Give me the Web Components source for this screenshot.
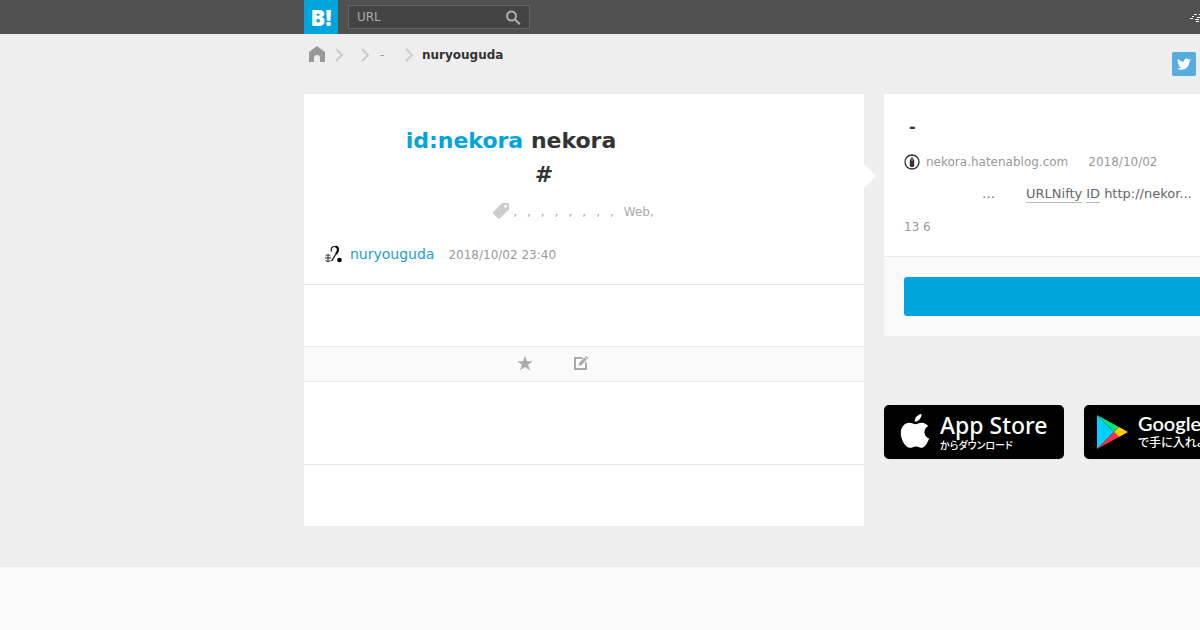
<!DOCTYPE html>
<html lang="ja">
<head>
<meta charset="utf-8">
<meta name="viewport" content="width=device-width, initial-scale=1">
<title>nuryouguda</title>
<style>
  body {
    --brand: #00a5de;
    --line: #e8e8e8;
    --muted: #999;
    --gutter: 304px;
    --wide: 380px;
    margin: 0;
    min-height: 100vh;
    overflow: hidden;
    background: #eee;
    color: #333;
    font: 12px/18px "DejaVu Sans", "Noto Sans CJK JP", sans-serif;
  }
</style>
</head>
<body>
<hb-page>
  <hb-header slot="header"></hb-header>
  <hb-breadcrumb slot="path">nuryouguda</hb-breadcrumb>
  <hb-share slot="share"></hb-share>
  <hb-comment>
    <hb-tags slot="tags"></hb-tags>
    <hb-user slot="user" name="nuryouguda">2018/10/02 23:40</hb-user>
  </hb-comment>
  <hb-entry slot="side" site="nekora.hatenablog.com" date="2018/10/02"></hb-entry>
  <hb-stores slot="side"></hb-stores>
</hb-page>

<script>
// Base class: clones the markup of the element into its shadow root
class HbElement extends HTMLElement {
  constructor() {
    super();
    const template = document.createElement('template');
    template.innerHTML = this.constructor.markup;
    this.attachShadow({ mode: 'open' });
    this.shadowRoot.appendChild(template.content.cloneNode(true));
  }
}

class HbPage extends HbElement {
  static markup = `
    <style>
      :host { display: flex; flex-direction: column; min-height: 100vh; }
      .grid {
        display: grid;
        grid-template-columns: minmax(560px, 3fr) minmax(var(--wide), 2fr);
        column-gap: 20px;
        margin-left: var(--gutter);
      }
      .top { height: 60px; align-items: start; }
      .footer { flex: 1; margin-top: 41px; background: #fafafa; }
    </style>
    <slot name="header"></slot>
    <div class="grid top">
      <slot name="path"></slot>
      <slot name="share"></slot>
    </div>
    <div class="grid">
      <main><slot></slot></main>
      <aside><slot name="side"></slot></aside>
    </div>
    <footer class="footer"></footer>
  `;
}
customElements.define('hb-page', HbPage);


class HbHeader extends HbElement {
  static markup = `
    <style>
      :host { display: block; background: #505050; }
      .bar {
        display: flex;
        align-items: center;
        gap: 10px;
        height: 34px;
        min-width: 960px;
        margin-left: var(--gutter);
      }
      .logo {
        width: 34px;
        background: var(--brand);
        color: #fff;
        font: 900 22px/34px "Noto Sans", "Open Sans", sans-serif;
        text-align: center;
        text-decoration: none;
      }
      form {
        display: flex;
        align-items: center;
        box-sizing: border-box;
        width: 182px;
        height: 24px;
        border: 1px solid #666;
        background: #444;
      }
      input {
        flex: 1;
        min-width: 0;
        padding: 0 8px;
        border: 0;
        background: none;
        color: #ddd;
        font: inherit;
      }
      input::placeholder { color: #aaa; opacity: 1; }
      button { padding: 0 8px; border: 0; background: none; line-height: 0; }
      .speed { margin-left: auto; margin-right: 55px; line-height: 0; }
    </style>
    <header class="bar">
      <a class="logo" href="#">B!</a>
      <form>
        <input type="search" placeholder="URL" aria-label="URL">
        <button type="button" aria-label="検索">
          <svg width="16" height="16" viewBox="0 0 16 16" fill="none" stroke="#b0b0b0" stroke-width="2">
            <circle cx="6.500" cy="7" r="4.500"/><path d="M9.800 10.300l5 5"/>
          </svg>
        </button>
      </form>
      <a class="speed" href="#" aria-label="お知らせ">
        <svg width="20" height="14" viewBox="0 0 20 14" stroke="#fff" stroke-width="1">
          <path d="M5 4.500h3M10 4.500h4M3 6.500h2M8 7.500h4M1 8.500h3M6 9.500h4M7 11.500h3"/>
        </svg>
      </a>
    </header>
  `;
}
customElements.define('hb-header', HbHeader);


class HbBreadcrumb extends HbElement {
  static markup = `
    <style>
      :host { display: block; font-weight: bold; }
      nav { display: flex; align-items: center; height: 41px; padding-left: 4px; }
      svg { display: block; flex: none; }
      a { color: var(--muted); font-weight: normal; text-decoration: none; }
      .home { margin-right: 8px; }
      .blank { width: 16px; }
      .title { width: 34px; padding-left: 10px; box-sizing: border-box; }
      .now { margin-left: 8px; }
    </style>
    <nav>
      <a class="home" href="#" aria-label="ホーム">
        <svg width="18" height="18" viewBox="0 0 18 18" fill="#999">
          <path d="M9 0L1 6v10h5v-4a3 3 0 0 1 6 0v4h5V6z"/>
        </svg>
      </a>
      <svg class="arrow" width="10" height="14" viewBox="0 0 10 14" fill="none" stroke="#ccc" stroke-width="2"><path d="M2 1l6 6-6 6"/></svg>
      <span class="blank"></span>
      <svg class="arrow" width="10" height="14" viewBox="0 0 10 14" fill="none" stroke="#ccc" stroke-width="2"><path d="M2 1l6 6-6 6"/></svg>
      <a class="title" href="#">-</a>
      <svg class="arrow" width="10" height="14" viewBox="0 0 10 14" fill="none" stroke="#ccc" stroke-width="2"><path d="M2 1l6 6-6 6"/></svg>
      <span class="now"><slot></slot></span>
    </nav>
  `;
}
customElements.define('hb-breadcrumb', HbBreadcrumb);


class HbShare extends HbElement {
  static markup = `
    <style>
      :host { display: flex; justify-content: flex-end; padding: 18px 68px 0 0; }
      button {
        display: grid;
        place-items: center;
        width: 24px;
        height: 24px;
        padding: 0;
        border: 0;
        border-radius: 2px;
        background: #55acde;
      }
    </style>
    <button type="button" aria-label="Twitter">
      <svg width="14" height="14" viewBox="0 0 24 24" fill="#fff">
        <path d="M23.6 4.9a9.700 9.700 0 0 1-2.700.75 4.800 4.800 0 0 0 2.100-2.650 9.700 9.700 0 0 1-3.100 1.200 4.850 4.850 0 0 0-8.250 4.400A13.700 13.700 0 0 1 1.700 3.600a4.850 4.850 0 0 0 1.500 6.450 4.800 4.800 0 0 1-2.200-.6v.06a4.850 4.850 0 0 0 3.900 4.750 4.850 4.850 0 0 1-2.200.08 4.850 4.850 0 0 0 4.500 3.360A9.700 9.700 0 0 1 0 19.700a13.700 13.700 0 0 0 7.450 2.180c8.900 0 13.800-7.400 13.800-13.800l-.02-.63a9.800 9.800 0 0 0 2.400-2.500z"/>
      </svg>
    </button>
  `;
}
customElements.define('hb-share', HbShare);


class HbComment extends HbElement {
  static markup = `
    <style>
      :host { display: block; background: #fff; }
      .head { position: relative; padding: 30px 20px 20px; }
      /* Pointer towards the entry card */
      .head::after {
        content: "";
        position: absolute;
        left: 100%;
        top: 70px;
        border: 12px solid transparent;
        border-left-color: #fff;
        border-right: 0;
      }
      h1 { margin: 0 0 11px; font-size: 22px; line-height: 34px; text-align: center; }
      h1 span { display: block; padding-right: 146px; }
      h1 .second { padding-right: 80px; }
      h1 a { color: var(--brand); text-decoration: none; }
      section { height: 61px; border-top: 1px solid var(--line); }
      .tall { height: 82px; }
      .actions {
        display: flex;
        justify-content: center;
        align-items: center;
        gap: 40px;
        height: 34px;
        padding-right: 62px;
        border-top: 1px solid var(--line);
        background: #fafafa;
      }
      button { padding: 0; border: 0; background: none; line-height: 0; }
    </style>
    <div class="head">
      <h1>
        <span><a href="#">id:nekora</a> nekora</span>
        <span class="second">#</span>
      </h1>
      <slot name="tags"></slot>
      <slot name="user"></slot>
    </div>
    <section></section>
    <div class="actions">
      <button type="button" aria-label="スター">
        <svg width="16" height="16" viewBox="0 0 16 16" fill="#aaa">
          <path d="M8 0l2 5.300h5.600l-4.500 3.400 1.700 5.500L8 11l-4.800 3.200 1.700-5.500L.4 5.300H6z"/>
        </svg>
      </button>
      <button type="button" aria-label="コメントする">
        <svg width="16" height="16" viewBox="0 0 16 16">
          <path d="M9.500 2H2v11h11V6.500" fill="none" stroke="#aaa" stroke-width="2"/>
          <path d="M5.500 9.700l.7-3 5.200-5.200 2.300 2.300L8.500 9zM12 1l1-1 2.300 2.300-1 1z" fill="#aaa"/>
        </svg>
      </button>
    </div>
    <section class="tall"></section>
    <section></section>
  `;
}
customElements.define('hb-comment', HbComment);


class HbTags extends HbElement {
  static markup = `
    <style>
      :host {
        display: flex;
        justify-content: center;
        align-items: center;
        gap: 10px;
        padding-right: 22px;
        color: #aaa;
      }
      svg { margin-right: -7px; }
    </style>
    <svg width="18" height="18" viewBox="0 0 18 18">
      <path d="M10 0h6a1 1 0 0 1 1 1v5.500L7.500 15.400a1 1 0 0 1-1.400 0L1 10.300a1 1 0 0 1 0-1.400z" fill="#ccc"/>
      <circle cx="13.500" cy="3.300" r="1.400" fill="#fff"/>
    </svg>
    <span>,</span><span>,</span><span>,</span><span>,</span>
    <span>,</span><span>,</span><span>,</span><span>,</span>
    <span>Web,</span>
  `;
}
customElements.define('hb-tags', HbTags);


class HbUser extends HbElement {
  static markup = `
    <style>
      :host {
        display: flex;
        align-items: baseline;
        height: 20px;
        margin-top: 23px;
        color: var(--muted);
      }
      svg { align-self: center; margin-right: 6px; }
      a { margin-right: 14px; color: #1ba0cb; font-size: 14px; line-height: 20px; text-decoration: none; }
    </style>
    <svg width="20" height="20" viewBox="0 0 20 20" fill="none" stroke="#111">
      <path d="M7.500 7.500C6.500 4 8.500 2.500 10.500 2.500c5 0 4.500 4.500 1.500 7.500-1.500 2-2.500 4.500-4.500 7" stroke-width="1.200"/>
      <path d="M11.500 2.500c3.500 1 3 4.500.5 7.500" stroke-width="2.200"/>
      <circle cx="15.500" cy="16" r="2.300" fill="#000" stroke="none"/>
      <path d="M1.500 12c1-1.500 4-1.500 5 0M1.500 16c1 2 4 2 5 0M1 14h6M4 11v6.500" stroke-width=".9"/>
    </svg>
    <a href="#"></a>
    <time><slot></slot></time>
  `;

  connectedCallback() {
    this.shadowRoot.querySelector('a').textContent = this.getAttribute('name');
  }
}
customElements.define('hb-user', HbUser);


class HbEntry extends HbElement {
  static markup = `
    <style>
      :host { display: block; background: #fff; color: var(--muted); }
      .body { padding: 20px; }
      h2 { margin: 0 0 12px; padding-left: 5px; color: #333; font-size: 16px; line-height: 26px; }
      .meta { display: flex; align-items: center; height: 20px; }
      .meta svg { margin-right: 6px; }
      .site { margin-right: 20px; color: inherit; text-decoration: none; }
      p {
        display: flex;
        margin: 13px 0 15px;
        padding-left: 78px;
        color: #666;
        font-size: 13px;
        line-height: 17px;
      }
      p a { margin-right: 4px; border-bottom: 1px solid #bbb; color: inherit; text-decoration: none; }
      .dots { margin-right: 31px; }
      .add { padding: 20px; border-top: 1px solid var(--line); background: #fafafa; }
      button {
        display: block;
        width: 100%;
        height: 39px;
        border: 0;
        border-radius: 3px;
        background: var(--brand);
      }
    </style>
    <div class="body">
      <h2>-</h2>
      <div class="meta">
        <svg width="16" height="16" viewBox="0 0 16 16">
          <circle cx="8" cy="8" r="7" fill="#fff" stroke="#333" stroke-width="1.300"/>
          <path d="M5.800 12V6.500L7.500 3h1l1.700 3.500V12l-1 1H6.800z" fill="#333"/>
          <path d="M8 3v4" stroke="#fff" stroke-width=".5"/>
        </svg>
        <a class="site" href="#"></a>
        <time></time>
      </div>
      <p><span class="dots">…</span><a href="#">URLNifty</a><a href="#">ID</a><span>http://nekor...</span></p>
      <div>13 6</div>
    </div>
    <div class="add"><button type="button" aria-label="ブックマークに追加"></button></div>
  `;

  connectedCallback() {
    this.shadowRoot.querySelector('.site').textContent = this.getAttribute('site');
    this.shadowRoot.querySelector('time').textContent = this.getAttribute('date');
  }
}
customElements.define('hb-entry', HbEntry);


class HbStores extends HbElement {
  static markup = `
    <style>
      :host { display: flex; gap: 20px; margin-top: 69px; }
      a {
        display: flex;
        align-items: center;
        box-sizing: border-box;
        width: 180px;
        height: 54px;
        border-radius: 5px;
        background: #000;
        color: #fff;
        text-decoration: none;
        white-space: nowrap;
      }
      .apple { gap: 10px; padding-left: 16px; }
      .google { gap: 8px; padding-left: 12px; }
      strong { display: block; font: 500 23px/26px "Noto Sans", sans-serif; }
      small {
        display: block;
        font: 500 10px/14px "Noto Sans CJK JP", sans-serif;
        font-feature-settings: "palt";
      }
      .google strong { font: 600 20px/20px Lato, sans-serif; }
      .google small { font-size: 12px; line-height: 18px; }
    </style>
    <a class="apple" href="#">
      <svg width="30" height="36" viewBox="0 0 30 36" fill="#fff">
        <path d="M21.500 0c.3 3.800-3 7.800-6.800 7.700C14.300 4 17.800.4 21.500 0z"/>
        <path d="M15.400 10.300c1.500 0 3.600-1.700 6.600-1.600 2.300.1 4.700 1.200 6.100 3.300-5.400 3.300-4.500 10.400 1 12.600-1.300 3.800-4 9-7.200 9.200-2.200 0-3.200-1.400-5.900-1.400s-3.800 1.400-5.900 1.400C5.500 33.600.8 26 .8 19.200.8 12.500 5 8.900 9.200 8.800c2.600 0 4.900 1.500 6.200 1.500z"/>
      </svg>
      <span><strong>App Store</strong><small>からダウンロード</small></span>
    </a>
    <a class="google" href="#">
      <svg width="34" height="36" viewBox="0 0 34 36">
        <path d="M1 1v34l17-17z" fill="#00d0ff"/>
        <path d="M1 1l22 12-5 5z" fill="#00e676"/>
        <path d="M1 35l22-12-5-5z" fill="#f6334a"/>
        <path d="M23 13l9 5-9 5-5-5z" fill="#ffcb00"/>
      </svg>
      <span><strong>Google Play</strong><small>で手に入れよう</small></span>
    </a>
  `;
}
customElements.define('hb-stores', HbStores);
</script>
</body>
</html>
